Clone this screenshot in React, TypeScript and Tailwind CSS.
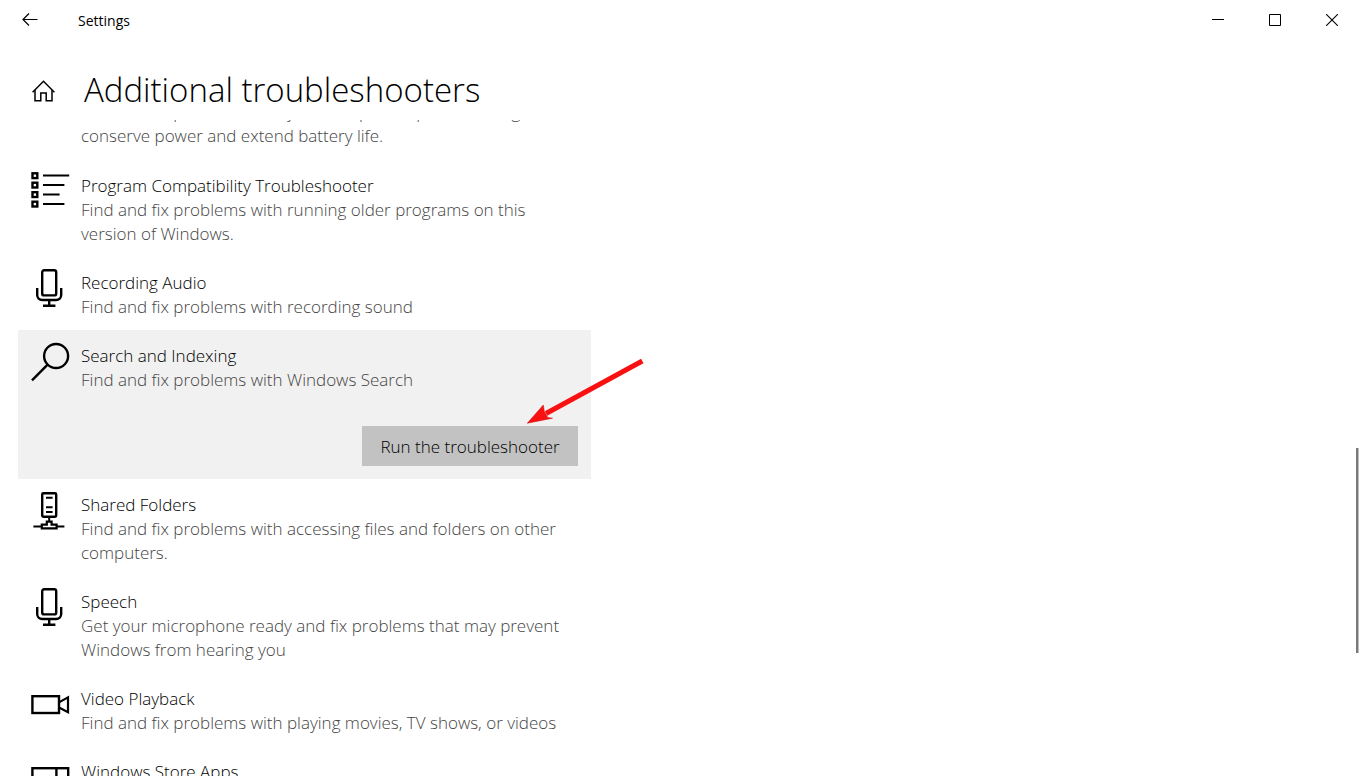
import { useState } from "react";
import type { ReactNode } from "react";
import clsx from "clsx";

type Troubleshooter = {
  id: string;
  title: string;
  description?: string;
  icon: ReactNode;
};

function Icon({ children }: { children: ReactNode }) {
  return (
    <svg
      viewBox="0 0 40 40"
      fill="none"
      stroke="currentColor"
      strokeWidth="2.4"
      className="size-10 shrink-0 overflow-visible"
      aria-hidden="true"
    >
      {children}
    </svg>
  );
}

function MicIcon() {
  return (
    <Icon>
      <rect x="12.2" y="3.2" width="14" height="25.2" rx="2" />
      <path d="M7.2 21v7a5 5 0 0 0 5 5h14a5 5 0 0 0 5-5v-7M19.2 33v5.2M13 38.7h12.4" />
    </Icon>
  );
}

function ListIcon() {
  return (
    <Icon>
      <rect x="2.5" y="3.3" width="4.8" height="4.8" />
      <rect x="2.5" y="12.7" width="4.8" height="4.8" />
      <rect x="2.5" y="22.2" width="4.8" height="4.8" />
      <rect x="2.5" y="31.7" width="4.8" height="4.8" />
      <path d="M13 5.5h26.2M13 15h21.4M13 24.5h16.6M13 34h21.4" strokeWidth="2" />
    </Icon>
  );
}

function SearchIcon() {
  return (
    <Icon>
      <circle cx="26.1" cy="16" r="12" />
      <path d="M17.6 24.6 2 40.4" />
    </Icon>
  );
}

function ServerIcon() {
  return (
    <Icon>
      <rect x="12.2" y="4.2" width="14" height="23.6" rx="1.2" />
      <path d="M16 8.8h6.6M16 18.2h6.6M16 23h6.6M19.2 28v4" strokeWidth="2" />
      <path d="M11.8 39.4v-3.8h5v-3h4.8v3h5v3.8zM3.4 37.5h8M27 37.5h7.4" strokeWidth="2.2" />
    </Icon>
  );
}

function VideoIcon() {
  return (
    <Icon>
      <rect x="2.4" y="13.2" width="26.6" height="16.8" />
      <path d="M29 19.4 38 14.4v14.8l-9-4.6" strokeWidth="2.2" />
    </Icon>
  );
}

function StoreAppsIcon() {
  return (
    <Icon>
      <rect x="2.4" y="12.2" width="35.8" height="26" />
      <path d="M26.4 12v26" />
    </Icon>
  );
}

const troubleshooters: Troubleshooter[] = [
  {
    id: "compatibility",
    title: "Program Compatibility Troubleshooter",
    description: "Find and fix problems with running older programs on this version of Windows.",
    icon: <ListIcon />,
  },
  {
    id: "recording",
    title: "Recording Audio",
    description: "Find and fix problems with recording sound",
    icon: <MicIcon />,
  },
  {
    id: "search",
    title: "Search and Indexing",
    description: "Find and fix problems with Windows Search",
    icon: <SearchIcon />,
  },
  {
    id: "shared",
    title: "Shared Folders",
    description: "Find and fix problems with accessing files and folders on other computers.",
    icon: <ServerIcon />,
  },
  {
    id: "speech",
    title: "Speech",
    description: "Get your microphone ready and fix problems that may prevent Windows from hearing you",
    icon: <MicIcon />,
  },
  {
    id: "video",
    title: "Video Playback",
    description: "Find and fix problems with playing movies, TV shows, or videos",
    icon: <VideoIcon />,
  },
  {
    id: "store",
    title: "Windows Store Apps",
    icon: <StoreAppsIcon />,
  },
];

function TitleBar() {
  const control = "flex h-10 w-[57px] items-center justify-center hover:bg-gray-200";

  return (
    <header className="flex h-10 shrink-0 items-center pr-px">
      <button type="button" aria-label="Back" className="flex h-10 w-[60px] items-center justify-center">
        <svg viewBox="0 0 16 14" className="h-3.5 w-4" fill="none" stroke="currentColor" strokeWidth="1.2" aria-hidden="true">
          <path d="M15.5 6.5H1M7 .5l-6 6 6 6" />
        </svg>
      </button>
      <span className="ml-[18px] pt-0.5 text-sm">Settings</span>
      <div className="ml-auto flex">
        <button type="button" aria-label="Minimize" className={control}>
          <svg viewBox="0 0 12 12" className="size-3" stroke="currentColor" aria-hidden="true">
            <path d="M0 5.5h12" />
          </svg>
        </button>
        <button type="button" aria-label="Maximize" className={control}>
          <svg viewBox="0 0 12 12" className="size-3" fill="none" stroke="currentColor" aria-hidden="true">
            <path d="M.5.5h11v11H.5z" />
          </svg>
        </button>
        <button type="button" aria-label="Close" className={control}>
          <svg viewBox="0 0 12 12" className="size-3" stroke="currentColor" strokeWidth="1.1" aria-hidden="true">
            <path d="m0 0 12 12M12 0 0 12" />
          </svg>
        </button>
      </div>
    </header>
  );
}

// Red pointer drawn over the selected row, aimed at its button
function PointerArrow() {
  return (
    <svg
      viewBox="0 0 120 68"
      className="pointer-events-none absolute top-7 left-[509px] h-[68px] w-[120px]"
      aria-hidden="true"
    >
      <path d="M115.3 3 19 55.5" stroke="#f91010" strokeWidth="5" />
      <path d="M.3 65.2 16.3 47l1 6.6 3.4 6 4.8.6z" fill="#f91010" stroke="#d41414" strokeWidth=".6" />
    </svg>
  );
}

export default function App() {
  const [selected, setSelected] = useState("search");

  return (
    <div className="flex h-screen flex-col overflow-hidden bg-white font-['Open_Sans','Noto_Sans',sans-serif] text-black">
      <TitleBar />

      <div className="flex h-20 shrink-0 items-center gap-7 px-8">
        <a href="#home" aria-label="Home" className="pt-[22px]">
          <svg viewBox="0 0 24 22" className="h-[22px] w-6" fill="none" stroke="currentColor" strokeWidth="1.5" aria-hidden="true">
            <path d="M.6 12.2 11.5 1.2l10.9 11" />
            <path d="M3 10v10.7h5.8v-7.6h5.4v7.6H20V10" />
          </svg>
        </a>
        <h1 className="pt-5 text-[33px] leading-[46px] font-light">Additional troubleshooters</h1>
      </div>

      <main className="relative min-h-0 flex-1 overflow-hidden pl-[18px] text-[17px] leading-6 font-light">
        {/* tail of the entry that is scrolled out of view */}
        <p className="-mt-5 max-w-[573px] pr-[13px] pb-3 pl-[63px] text-[#444444]">
          Find and fix problems with your computer's power settings to conserve power and extend battery life.
        </p>
        <ul className="max-w-[573px]">
          {troubleshooters.map((item) => {
            const open = item.id === selected;

            return (
              <li
                key={item.id}
                onClick={() => setSelected(item.id)}
                className={clsx("relative pt-2.5 pr-[13px] pl-3", open ? "bg-[#f1f1f1] pb-[13px]" : "pb-[11px]")}
              >
                <div className="flex gap-[11px]">
                  {item.icon}
                  <div className="pt-1">
                    <h2>{item.title}</h2>
                    {item.description && <p className="text-[#444444]">{item.description}</p>}
                  </div>
                </div>
                {open && (
                  <div className="mt-[34px] flex justify-end">
                    <button type="button" className="h-10 w-[216px] bg-[#c2c2c2] pt-0.5 hover:bg-[#b4b4b4]">
                      Run the troubleshooter
                    </button>
                  </div>
                )}
                {item.id === "search" && <PointerArrow />}
              </li>
            );
          })}
        </ul>
        {/* scroll thumb */}
        <div className="absolute top-1/2 right-0.5 h-[205px] w-[3px] border-r border-[#bdbdbd] bg-[#7a7a7a]" />
      </main>
    </div>
  );
}
